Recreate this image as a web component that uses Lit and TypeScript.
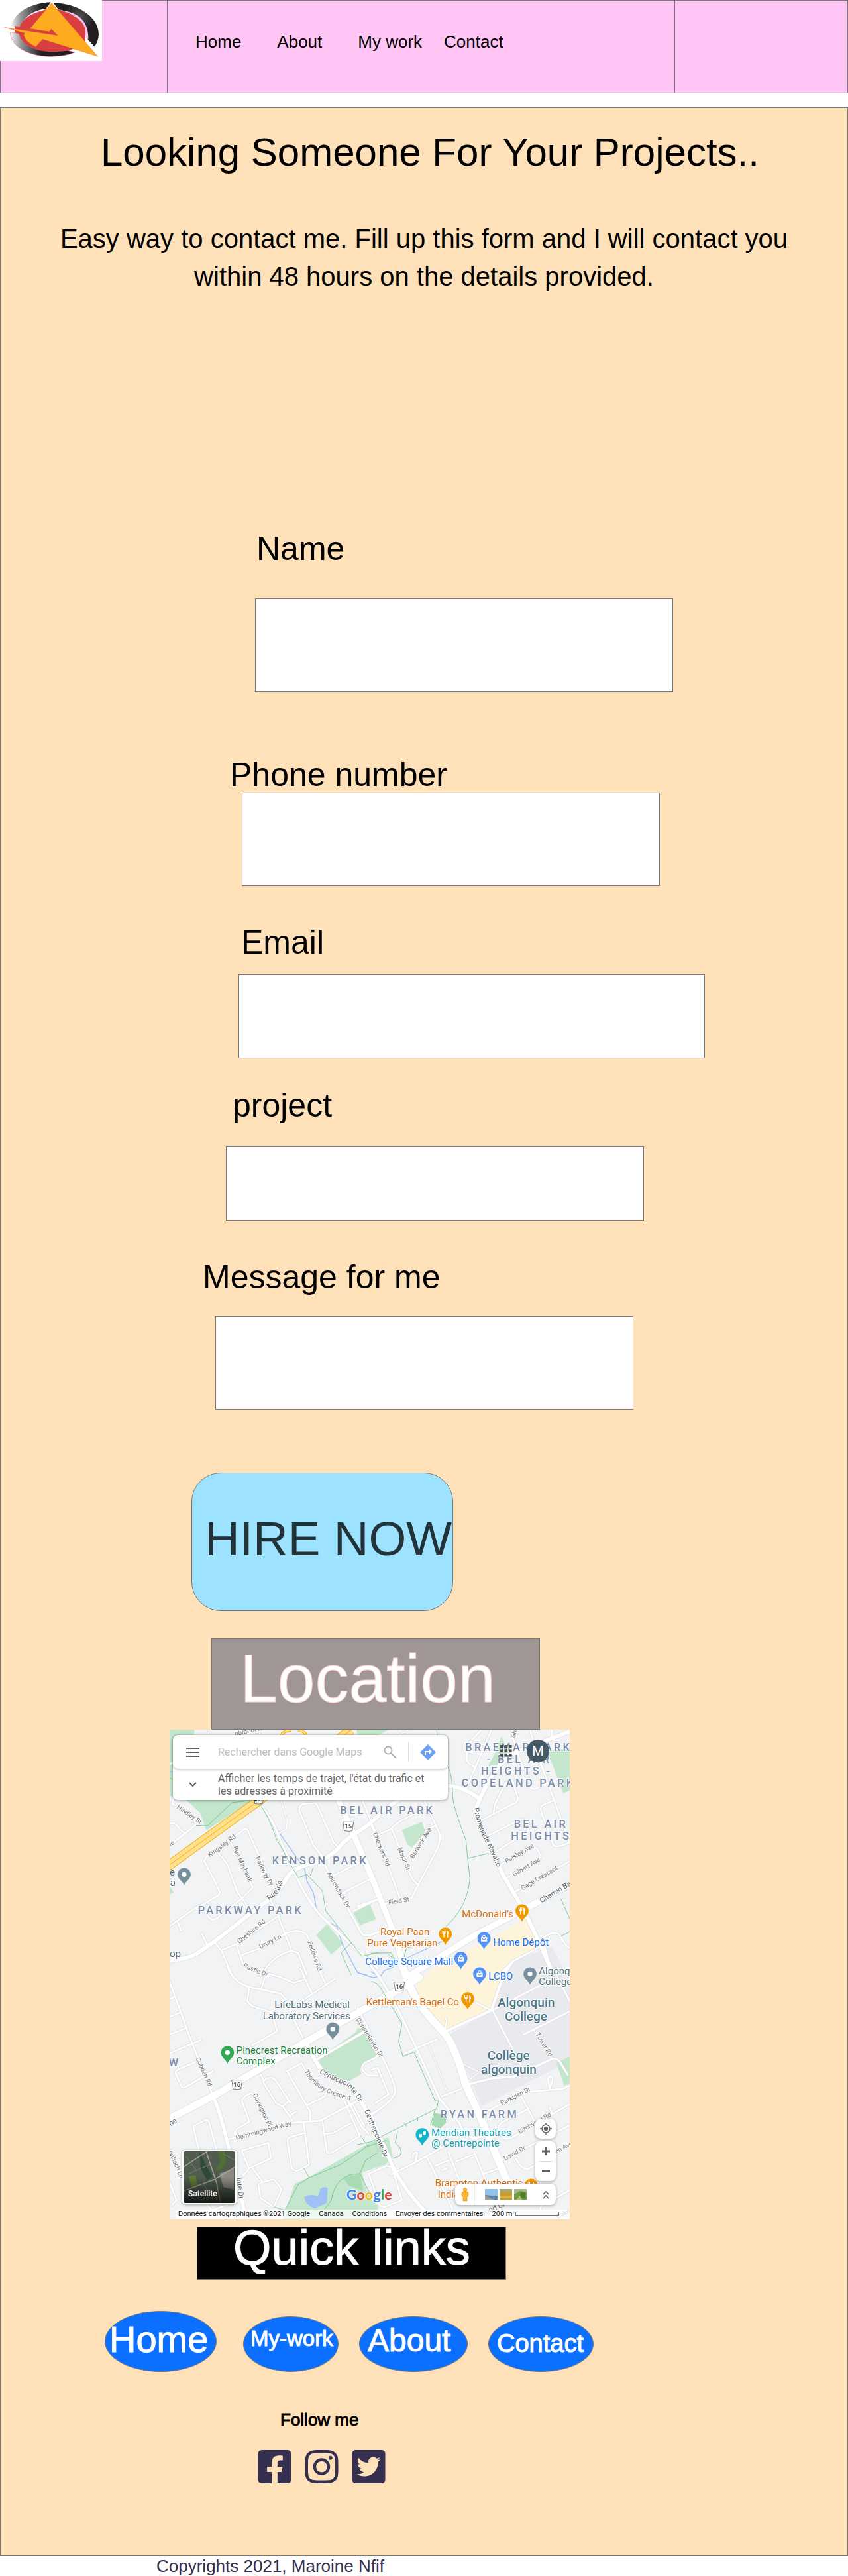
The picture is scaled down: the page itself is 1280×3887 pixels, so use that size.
import { LitElement, html, css, svg } from "lit";
import { customElement } from "lit/decorators.js";

/* ---------- Map data ----------
   The map is drawn on an 1812 x 2217 canvas. Every shape belongs to one of
   four tiles and is written in the coordinates of that tile. */
type Tile = "a" | "b" | "c" | "d";
const TILE: Record<Tile, [number, number]> = {
  a: [-18, -30],
  b: [912, -30],
  c: [-18, 1080],
  d: [912, 1080],
};
const at = (t: Tile) => `translate(${TILE[t][0]} ${TILE[t][1]})`;

const AREAS: [Tile, string, string][] = [
  ["a", "#c3e6cd", "M18,30H130L126,70V200L60,330H18Z"],
  ["a", "#c3e6cd", "M90,345H400L185,485L165,430L155,405Z"],
  ["a", "#c3e6cd", "M682,960L730,910L805,1000L750,1048Z"],
  ["a", "#c3e6cd", "M850,860L925,818L952,888L880,915Z"],
  ["a", "#c3e6cd", "M18,740L36,765L18,777Z"],
  ["a", "#c3e6cd", "M865,30H1010L960,55H870Z"],
  ["b", "#c3e6cd", "M140,485L230,447L245,490L200,572L165,550Z"],
  ["b", "#c3e6cd", "M590,60L625,130L600,185L530,195L565,130Z"],
  ["b", "#c3e6cd", "M800,130L900,110V305L870,318Z"],
  ["b", "#c3e6cd", "M-10,815L22,885L-15,895Z"],
  ["c", "#c3e6cd", "M690,410L860,290L870,270L895,275L960,400L880,450L886,480L830,510L730,490Z"],
  ["c", "#c3e6cd", "M530,1137L585,975L645,948L960,770L1010,768L1030,860L990,890L890,925L905,990Q930,1050 960,1070L970,1137Z"],
  ["c", "#a8dab5", "M805,950L880,930L895,1005L830,985Z"],
  ["c", "#9fc1f8", "M628,1035Q655,1018 690,1032L700,1000Q715,984 734,995L730,1062L675,1086Q632,1070 628,1035Z"],
  ["b", "#fdf4d9", "M205,1180L270,1120L700,888L780,1000L640,1075L620,1120L570,1270L520,1305L340,1390L310,1380Q220,1260 205,1180Z"],
  ["d", "#e8eaed", "M350,300L540,200L600,60L640,-30L820,-100L900,60V420L500,625L450,500Z"],
  ["d", "#a8dab5", "M288,655L340,665V700L312,727L275,710Z"],
  ["d", "#c3e6cd", "M840,430L900,400V520L875,532Z"],
];

const ROADS: [Tile, number, string][] = [
  ["a", 8, "M18,920L130,840L180,815L240,780Q250,770 240,755L215,700L175,625L185,605L345,490Q362,465 375,492L490,750"],
  ["a", 8, "M230,575L280,640L325,765L375,835"],
  ["a", 8, "M285,520L395,745L350,790L230,885Q205,900 190,870L175,845"],
  ["a", 10, "M405,340Q480,420 510,510L590,690Q640,800 700,870L860,1020L960,1110"],
  ["a", 5, "M520,345L550,440L548,480L510,500"],
  ["a", 8, "M715,610L670,555L605,395Q605,370 630,365L680,362L695,390L760,540L785,565"],
  ["a", 9, "M700,600L760,720L890,955Q905,972 960,945"],
  ["a", 8, "M760,690L880,630M800,770L920,710M850,850L960,798M890,345L960,520"],
  ["a", 8, "M55,900L70,940M165,955L185,1000M220,990L255,1035L300,1140"],
  ["a", 8, "M470,790L500,850L570,1030M250,1030L320,1000L515,870M320,1000L350,1090"],
  ["a", 8, "M345,1050L440,1015L530,960Q600,920 640,960L660,1000L710,1130"],
  ["a", 8, "M440,1140Q470,1060 570,1030L600,1040L640,1140"],
  ["a", 8, "M18,455Q40,445 60,475L85,500M18,555L138,460L118,410L30,365L38,330M18,185L60,170"],
  ["b", 8, "M500,30L435,100V170Q450,195 475,200M545,30L430,300"],
  ["b", 8, "M555,405L560,370L610,270L640,260L665,340Q665,360 645,365L500,440"],
  ["b", 8, "M665,180Q700,290 740,300L800,270M720,30L745,120L830,350L900,545"],
  ["b", 8, "M825,350L775,372Q765,385 770,400L825,550Q835,570 900,540M640,60L690,210M820,30V60"],
  ["b", 8, "M510,520L680,435Q715,430 715,470L710,490L570,580"],
  ["b", 8, "M590,640L725,562Q745,555 755,575L768,600L760,620L615,700M650,765L900,625"],
  ["b", 8, "M0,460L30,520L130,790M0,520L90,480Q130,430 250,395M95,480L180,690Q190,715 212,730M160,610L260,480L290,465"],
  ["b", 8, "M240,345L310,500Q315,535 300,570L215,730L185,790L55,820M-60,830L20,800M0,960L80,930"],
  ["b", 8, "M560,1160L640,1080L770,1010M770,980Q840,925 860,970Q880,1010 905,1022M780,990L810,1100"],
  ["b", 5, "M30,345L60,385M170,30L100,70"],
  ["c", 8, "M18,60L120,340L215,580"],
  ["c", 9, "M280,-10Q300,60 380,85L520,115Q550,140 565,200L620,310"],
  ["c", 8, "M378,90L370,150L390,170L480,200L505,285L390,350"],
  ["c", 8, "M450,20L520,40L580,65L630,50M610,0L660,110M600,160L765,48M690,0L725,70M455,20L435,90"],
  ["c", 8, "M18,140L40,130M18,220L65,200M18,300L95,270M18,385L160,325"],
  ["c", 8, "M215,465L85,540L75,540L45,475Q45,462 60,457L135,425"],
  ["c", 10, "M690,410L895,290"],
  ["c", 8, "M640,470L615,430L550,465L655,650V690"],
  ["c", 8, "M565,610L500,510Q480,485 455,500L442,515L500,610L530,625L575,690M530,625L560,600M560,670L590,650M430,480L445,510"],
  ["c", 9, "M280,775L570,700L700,690L870,600"],
  ["c", 8, "M320,755V728L380,695L345,600Q345,585 385,565L410,575L470,715"],
  ["c", 8, "M230,820L195,690L185,685L125,715L150,820"],
  ["c", 8, "M345,825L465,790L478,860L380,905L350,940M345,825L375,900M390,900L440,970"],
  ["c", 8, "M435,970L490,955L525,1000L490,1080L430,1040L420,980Z"],
  ["c", 8, "M640,620L720,580L728,560M810,600L880,760L750,835Q735,840 730,830L710,690"],
  ["c", 8, "M630,745L560,765Q550,770 552,785L570,900Q580,922 600,915L645,893L650,885L625,700M720,750L760,745L840,700M820,590L890,720L920,750M850,620L900,715"],
  ["c", 8, "M18,970L50,1050L30,1070M160,1040L210,1095L280,1070"],
  ["c", 8, "M960,400L900,430Q885,445 895,465L915,485H960M960,645L920,665"],
  ["d", 10, "M-20,-30Q60,40 200,350L310,590L400,700Q430,780 490,765L560,735"],
  ["d", 8, "M145,390L200,365L300,320M320,580L410,545"],
  ["d", 4, "M260,340L345,560M410,430L490,470L440,510"],
  ["d", 10, "M440,525L550,498L650,490L820,410"],
  ["d", 8, "M820,410Q850,405 865,440L890,480M550,190L680,440M550,190L800,60M690,300L900,195M740,280L820,410M840,30L900,150M475,155L540,190"],
  ["d", 12, "M640,-30L600,30L545,190L340,285"],
  ["d", 6, "M335,280L342,240L338,225"],
  ["d", 8, "M500,660L700,560L870,545L900,530M810,545L802,510Q800,490 815,488Q828,495 818,520L810,540"],
  ["d", 8, "M680,580L760,730M810,630L820,660M715,635L590,700Q570,720 580,735L600,765Q610,778 640,765L900,615"],
  ["d", 8, "M590,870L900,710M650,850Q680,912 710,910L900,805M770,1100Q755,1080 790,1065L900,1005"],
  ["d", 8, "M90,935L190,885L340,800M250,850L370,1090M350,830L400,960L410,1000M385,875L470,840L560,1060M290,895L350,870M320,915L345,905M510,930L570,910"],
  ["d", 8, "M-10,930L70,895L95,900L140,1050L60,1080L40,1075ZM190,860Q185,830 210,835L200,880M0,460L30,450L80,570L20,610"],
  ["d", 8, "M-60,180L50,400Q110,520 110,560Q100,600 0,665"],
  ["c", 16, "M215,580Q245,640 290,830L360,1110"],
  ["c", 18, "M640,340Q660,400 720,480Q850,530 890,610L930,680"],
  ["d", 16, "M0,670L100,900Q150,1000 245,1100"],
  ["a", 18, "M0,1078Q90,1070 140,1045L220,990L380,865L480,790Q520,750 560,685Q600,645 680,632Q760,600 800,545L850,505Q930,460 980,400L1050,350Q1150,285 1290,285Q1350,290 1425,345"],
  ["b", 18, "M920,30L660,130Q570,170 490,350L470,400Q490,470 530,540L600,690L700,860L810,1100"],
  ["b", 26, "M-190,250L-80,500L0,690L100,940L150,1100"],
  ["d", 34, "M135,-30L180,90Q220,180 330,290Q380,350 430,530L490,660L640,1020"],
  ["c", 32, "M0,690L230,570L640,330L1060,95L1150,40"],
  ["b", 28, "M180,1140L480,955L700,840L910,725"],
];

const TRAILS: [Tile, string][] = [
  ["a", "M430,370Q470,430 500,520L600,700L640,685L710,760L725,850L840,995L890,1055L960,1040"],
  ["a", "M840,995L795,1040L840,1140M140,463L190,465L300,360L380,350M18,250L35,255M668,655L655,690"],
  ["b", "M298,30L300,60M350,200Q370,240 370,340Q380,400 430,530Q440,640 448,700Q440,830 340,920"],
  ["b", "M440,612L530,590M860,795L900,885M860,965L900,945M0,1042L90,1040L110,1070L80,1050M150,1060L160,1020L240,990"],
  ["d", "M0,60Q30,60 50,100L140,250L125,330L145,400L195,380L290,600L305,600L298,635L0,785L-70,800"],
  ["d", "M120,740L110,790Q150,820 130,850L100,860M150,700L160,715M208,670L212,690M270,710L290,640"],
  ["c", "M490,1080L540,1095L600,980L650,948L790,890L915,805L1000,780M915,805L885,760M650,948L628,908"],
  ["c", "M720,1090L750,1050Q770,930 880,930L905,870L960,835M880,930L920,1010"],
];

const STREAMS: [Tile, string][] = [
  ["a", "M425,360L445,395M510,490L630,660L640,715L670,770L683,840M725,895L775,920L800,1000L870,1130L910,1140M18,220H35"],
  ["b", "M160,1065L320,990M0,1125L40,1150L60,1120L100,1105"],
  ["c", "M860,0L870,20L940,42L960,38"],
];

const LABELS: [Tile, number, number, number, string, string][] = [
  ["a", 790, 410, 0, "area", "BEL AIR PARK"],
  ["a", 482, 638, 0, "area", "KENSON PARK"],
  ["a", 146, 863, 0, "area", "PARKWAY PARK"],
  ["b", 427, 127, 0, "area", "BRAEMAR PARK"],
  ["b", 524, 181, 0, "area", "- BEL AIR"],
  ["b", 498, 235, 0, "area", "HEIGHTS -"],
  ["b", 410, 289, 0, "area", "COPELAND PARK"],
  ["b", 647, 473, 0, "area", "BEL AIR"],
  ["b", 634, 527, 0, "area", "HEIGHTS"],
  ["d", 314, 678, 0, "area", "RYAN FARM"],
  ["c", 14, 445, 0, "area", "W"],
  ["b", 412, 880, 0, "poi food", "McDonald's"],
  ["b", 42, 961, 0, "poi food", "Royal Paan -"],
  ["b", -17, 1010, 0, "poi food", "Pure Vegetarian"],
  ["b", 553, 1007, 0, "poi shop", "Home Dépôt"],
  ["a", 904, 1095, 0, "poi shop", "College Square Mall"],
  ["d", 532, 52, 0, "poi shop", "LCBO"],
  ["d", 760, 27, 0, "poi civic", "Algonquin"],
  ["d", 760, 76, 0, "poi civic", "College"],
  ["c", 908, 167, 0, "poi food", "Kettleman's Bagel Co"],
  ["c", 493, 181, 0, "poi civic", "LifeLabs Medical"],
  ["c", 440, 230, 0, "poi civic", "Laboratory Services"],
  ["c", 320, 387, 0, "poi park", "Pinecrest Recreation"],
  ["c", 320, 435, 0, "poi park", "Complex"],
  ["d", 273, 760, 0, "poi arts", "Meridian Theatres"],
  ["d", 273, 808, 0, "poi arts", "@ Centrepointe"],
  ["d", 290, 988, 0, "poi food", "Brampton Authentic"],
  ["d", 302, 1037, 0, "poi food", "Indian"],
  ["a", 18, 690, 0, "poi civic", "e"],
  ["a", 20, 738, 0, "poi civic", "a"],
  ["a", 18, 1058, 0, "poi civic", "op"],
  ["d", 573, 174, 0, "campus", "Algonquin"],
  ["d", 606, 237, 0, "campus", "College"],
  ["d", 527, 415, 0, "campus", "Collège"],
  ["d", 498, 478, 0, "campus", "algonquin"],
  ["a", 48, 385, 34, "street", "Hindley St"],
  ["a", 200, 608, -37, "street", "Kingsley Rd"],
  ["a", 305, 562, 66, "street", "Rue Maybank"],
  ["a", 405, 610, 63, "street", "Parkway Dr"],
  ["a", 728, 680, 60, "street", "Adirondack Dr"],
  ["a", 334, 1000, -39, "street", "Cheshire Rd"],
  ["a", 430, 1022, -27, "street", "Drury Ln"],
  ["a", 642, 992, 70, "street", "Fellows Rd"],
  ["a", 350, 1105, 22, "street", "Rustic Dr"],
  ["a", 18, 562, -35, "street", "ve"],
  ["a", 315, 58, -12, "street", "nbrandt Rd"],
  ["b", 8, 500, 68, "street", "Checkers Rd"],
  ["b", 120, 568, 67, "street", "Major St"],
  ["b", 192, 615, -58, "street", "Berwick Ave"],
  ["b", 80, 822, -9, "street", "Field St"],
  ["b", 650, 68, -68, "street", "Sherman Dr"],
  ["b", 614, 636, -31, "street", "Paisley Ave"],
  ["b", 648, 695, -31, "street", "Gilbert Ave"],
  ["b", 686, 758, -31, "street", "Gage Crescent"],
  ["b", 772, 815, -31, "street main", "Chemin Baseline"],
  ["c", 136, 408, 66, "street", "Cobden Rd"],
  ["c", 394, 572, 64, "street", "Covington Pl"],
  ["c", 320, 778, -15, "street", "Hemmingwood Way"],
  ["c", 862, 232, 58, "street", "Constellation Dr"],
  ["c", 12, 830, 67, "street", "onbach Ln"],
  ["c", 22, 714, -30, "street main", "ne"],
  ["c", 320, 950, 82, "street main", "inte Dr"],
  ["d", 745, 298, 60, "street", "Tower Rd"],
  ["d", 592, 620, -27, "street", "Parkglen Dr"],
  ["d", 674, 750, -30, "street", "Birchview Rd"],
  ["d", 608, 872, -30, "street", "David Dr"],
  ["d", 780, 868, -27, "street", "Wolden Ave"],
  ["d", 480, 1128, -22, "street main", "nwood Dr"],
  ["d", 845, 1135, -27, "street", "Oakridge"],
];

const CURVED: [Tile, string, string, string][] = [
  ["a", "M470,804L515,765L534,700L538,660", "street main", "Rue Iris"],
  ["b", "M465,385Q480,470 530,560L600,720", "street main", "Promenade Navaho"],
  ["c", "M695,474Q760,508 815,530Q865,565 890,650", "street main", "Centrepointe Dr"],
  ["c", "M900,645L1030,960", "street main", "Centrepointe Dr"],
  ["c", "M628,466Q675,560 815,590L850,600", "street", "Thornbury Crescent"],
];

const FORK = "M-15,-16V-6Q-15,1 -9,2V16H-5V2Q1,1 1,-6V-16H-2V-6H-5V-16H-9V-6H-12V-16ZM7,16V-16Q15,-12 15,0H12V16Z";
const BAG = "M-14,-5H-8V-8A8,8 0 0 1 8,-8V-5H14V14H-14ZM-5,-5H5V-8A5,5 0 0 0 -5,-8ZM-8,-1A8,8 0 0 0 8,-1H5A5,5 0 0 1 -5,-1Z";
const DOT = "M-11,0A11,11 0 1 0 11,0A11,11 0 1 0 -11,0Z";
const MASKS = "M-16,-2H-1V10Q-8,18 -16,10ZM2,-14H17V-2Q10,6 2,-2Z";
const PINS: [Tile, number, number, string, string][] = [
  ["a", 84, 685, "#78909c", DOT],
  ["b", 684, 850, "#f29900", FORK],
  ["b", 337, 955, "#f29900", FORK],
  ["b", 512, 975, "#5491f5", BAG],
  ["b", 407, 1065, "#5491f5", BAG],
  ["d", 492, 25, "#5491f5", BAG],
  ["d", 720, 25, "#78909c", DOT],
  ["d", 438, 138, "#f29900", FORK],
  ["c", 757, 275, "#78909c", DOT],
  ["c", 280, 382, "#34a853", DOT],
  ["d", 232, 753, "#12b5cb", MASKS],
  ["d", 725, 982, "#f29900", FORK],
];

const SHIELDS: [Tile, number, number, string][] = [
  ["a", 827, 468, "15"],
  ["c", 323, 526, "16"],
  ["d", 128, 82, "16"],
  ["a", 422, 344, "417"],
];

const GOOGLE: [string, string][] = [
  ["G", "#4285f4"], ["o", "#ea4335"], ["o", "#fbbc04"],
  ["g", "#4285f4"], ["l", "#34a853"], ["e", "#ea4335"],
];

@customElement("city-map")
export class CityMap extends LitElement {
  static styles = css`
    :host { display: block; position: relative; overflow: hidden; font-family: Roboto, "Liberation Sans", sans-serif; background: #f1f3f4; }
    * { box-sizing: border-box; }
    .canvas { display: block; width: 100%; height: auto; }
    button { border: 0; background: none; padding: 0; margin: 0; font: inherit; color: inherit; cursor: pointer; display: flex; align-items: center; justify-content: center; }
    text { paint-order: stroke; stroke: #fff; stroke-linejoin: round; }
    .area { font-size: 49px; font-weight: 500; letter-spacing: 10px; fill: #7b8ba8; stroke-width: 5px; }
    .poi { font-size: 45px; stroke-width: 6px; }
    .food { fill: #d56e0c; }
    .shop { fill: #1a73e8; }
    .civic { fill: #546e7a; }
    .park { fill: #188038; }
    .arts { fill: #129eaf; }
    .campus { font-size: 57px; font-weight: 500; fill: #4a7688; stroke-width: 6px; }
    .street { font-size: 29px; fill: #757575; stroke-width: 5px; }
    .main { font-size: 33px; fill: #5a6468; }
    .shield { font-size: 28px; fill: #333; stroke: none; text-anchor: middle; font-weight: 500; }
    .brand { font-family: Lato, sans-serif; font-size: 65px; font-weight: 700; stroke-width: 6px; }

    .panel { position: absolute; left: 5px; top: 8px; width: 415px; max-width: 80%; border-radius: 8px; background: #fff; box-shadow: 0 1px 4px rgba(0, 0, 0, 0.35); color: #666; }
    .search { display: flex; align-items: center; height: 51px; padding: 0 18px; border-radius: 8px; box-shadow: 0 1px 4px rgba(0, 0, 0, 0.3); }
    .search input { flex: 1; min-width: 0; margin-left: 26px; padding: 0; border: 0; outline: 0; background: none; font: 16px/20px Roboto, sans-serif; }
    .search input::placeholder { color: #bdbdbd; opacity: 1; }
    .divider { width: 1px; height: 29px; margin: 0 17px; background: #ddd; }
    .hint { display: flex; align-items: center; gap: 32px; height: 47px; padding-left: 24px; font-size: 16px; line-height: 19px; }
    .hint p { margin: 0; }
    .account { position: absolute; right: 31px; top: 15px; display: flex; align-items: center; gap: 22px; }
    .avatar { width: 34px; height: 34px; border-radius: 50%; background: #455a64; color: #fff; font-size: 20px; }
    .controls { position: absolute; right: 21px; bottom: 22px; display: flex; flex-direction: column; align-items: flex-end; gap: 4px; }
    .card { background: #fff; border-radius: 8px; box-shadow: 0 1px 4px rgba(0, 0, 0, 0.35); }
    .locate { width: 31px; height: 30px; }
    .zoom { width: 31px; }
    .zoom button { width: 31px; height: 30px; }
    .zoom button + button::before { content: ""; position: absolute; width: 21px; height: 1px; margin-bottom: 30px; background: #ddd; }
    .bar { display: flex; align-items: center; width: 152px; height: 32px; }
    .bar .figure { width: 30px; height: 32px; border-right: 1px solid #eee; }
    .thumbs { flex: 1; display: flex; gap: 3px; justify-content: center; }
    .bar .more { width: 30px; height: 32px; }
    .satellite { position: absolute; left: 19px; bottom: 23px; width: 82px; height: 82px; border: 2px solid #fff; border-radius: 5px; overflow: hidden; box-shadow: 0 1px 4px rgba(0, 0, 0, 0.35); }
    .satellite svg { position: absolute; inset: 0; }
    .satellite span { position: absolute; left: 7px; bottom: 7px; color: #fff; font-size: 12px; line-height: 14px; font-weight: 500; }
    .credits { position: absolute; left: 10px; right: 0; bottom: 1px; display: flex; gap: 13px; height: 14px; padding-left: 3px; background: rgba(255, 255, 255, 0.7); font-size: 11px; line-height: 14px; color: #111; white-space: nowrap; }
    .credits a { color: inherit; text-decoration: none; }
    .scale { display: flex; align-items: center; gap: 4px; }
    .rule { width: 67px; height: 6px; border: 2px solid #777; border-top: 0; }
  `;

  private road(pick: (w: number) => number, color: string) {
    return ROADS.map(([t, w, d]) => svg`<path transform=${at(t)} d=${d} stroke=${color} stroke-width=${pick(w)} />`);
  }

  private drawing() {
    return svg`
      <rect width="1812" height="2217" fill="#f1f3f4" />
      ${AREAS.map(([t, c, d]) => svg`<path transform=${at(t)} d=${d} fill=${c} />`)}
      <g fill="none" stroke-linecap="round" stroke-linejoin="round">
        ${STREAMS.map(([t, d]) => svg`<path transform=${at(t)} d=${d} stroke="#9fc1f8" stroke-width="4" />`)}
        ${this.road((w) => w + 5, "#dddfe3")}
        ${this.road((w) => w, "#ffffff")}
        ${TRAILS.map(([t, d]) => svg`<path transform=${at(t)} d=${d} stroke="#6abf82" stroke-width="2.5" />`)}
        <g transform=${at("a")} stroke-linecap="butt">
          <path d="M0,655L430,345L840,30" stroke="#f9ab00" stroke-width="44" />
          <path d="M0,655L430,345L840,30" stroke="#ffe08f" stroke-width="38" />
          <path d="M0,655L430,345L840,30" stroke="#f9ab00" stroke-width="3" />
          <path d="M520,60Q530,35 570,32M640,60Q630,35 600,32" stroke="#f9ab00" stroke-width="12" />
          <path d="M520,60Q530,35 570,32M640,60Q630,35 600,32" stroke="#ffe08f" stroke-width="7" />
        </g>
      </g>
      ${SHIELDS.map(([t, x, y, n]) => svg`
        <g transform=${at(t)}><g transform="translate(${x} ${y})">
          <path d="M-24,-20H24Q22,-8 20,4L18,20Q0,24 -18,20L-20,4Q-22,-8 -24,-20Z" fill="#fff" stroke="#777" stroke-width="3" stroke-linejoin="round" />
          <text class="shield" y="10">${n}</text>
        </g></g>`)}
      ${LABELS.map(([t, x, y, r, c, s]) => svg`
        <g transform=${at(t)}><text class=${c} transform="translate(${x} ${y}) rotate(${r})">${s}</text></g>`)}
      ${CURVED.map(([t, d, c, s], i) => svg`
        <g transform=${at(t)}><path id="curve${i}" d=${d} fill="none" /><text class=${c}><textPath href="#curve${i}">${s}</textPath></text></g>`)}
      ${PINS.map(([t, x, y, c, g]) => svg`
        <g transform=${at(t)}><g transform="translate(${x} ${y})">
          <path d="M0,54C-5,30 -31,24 -31,0A31,31 0 1 1 31,0C31,24 5,30 0,54Z" fill=${c} stroke="#fff" stroke-width="2" />
          <path d=${g} fill="#fff" fill-rule="evenodd" />
        </g></g>`)}
      <text class="brand" x="800" y="2128">${GOOGLE.map(([s, c]) => svg`<tspan fill=${c}>${s}</tspan>`)}</text>
    `;
  }

  render() {
    return html`
      <svg class="canvas" viewBox="0 0 1812 2217" role="img" aria-label="Carte">${this.drawing()}</svg>

      <div class="panel">
        <div class="search">
          <button aria-label="Menu">
            <svg width="24" height="16" viewBox="0 0 24 16"><path d="M2,2H22M2,8H22M2,14H22" stroke="#616161" stroke-width="2" /></svg>
          </button>
          <input type="search" aria-label="Rechercher dans Google Maps" placeholder="Rechercher dans Google Maps" />
          <button aria-label="Rechercher">
            <svg width="20" height="20" viewBox="0 0 20 20" fill="none" stroke="#b0b0b0" stroke-width="2"><circle cx="7" cy="7" r="5.5" /><path d="M11,11L19,19" /></svg>
          </button>
          <span class="divider"></span>
          <button aria-label="Itinéraires">
            <svg width="24" height="24" viewBox="0 0 24 24"><path d="M12,0.5L23.5,12L12,23.5L0.5,12Z" fill="#6a9ff8" stroke="#6a9ff8" stroke-linejoin="round" /><path d="M8,16V11H15" fill="none" stroke="#fff" stroke-width="2" /><path d="M14,7L18,11L14,15Z" fill="#fff" /></svg>
          </button>
        </div>
        <div class="hint">
          <button aria-label="Développer">
            <svg width="12" height="8" viewBox="0 0 12 8"><path d="M1,1L6,6L11,1" fill="none" stroke="#616161" stroke-width="2" /></svg>
          </button>
          <p>Afficher les temps de trajet, l'état du trafic et<br />les adresses à proximité</p>
        </div>
      </div>

      <div class="account">
        <button aria-label="Applications">
          <svg width="18" height="18" viewBox="0 0 18 18" fill="#333" fill-opacity="0.85">
            ${[0, 1, 2].map((r) => [0, 1, 2].map((c) => svg`<rect x=${c * 6.5} y=${r * 6.5} width="4.6" height="4.6" />`))}
          </svg>
        </button>
        <button class="avatar" aria-label="Compte">M</button>
      </div>

      <button class="satellite">
        <svg viewBox="0 0 78 78">
          <defs><linearGradient id="shade" x2="0" y2="1"><stop offset="0.5" stop-opacity="0" /><stop offset="1" stop-opacity="0.75" /></linearGradient></defs>
          <rect width="78" height="78" fill="#4f5c4e" />
          <path d="M24,0L34,22L44,38L36,44L26,26Z" fill="#2c4a35" />
          <path d="M52,0H62L64,18L54,30L48,28L56,16Z" fill="#4f7030" />
          <path d="M8,38L18,36L22,54L12,56Z" fill="#5f7a35" />
          <path d="M54,34L76,26V58L60,54Z" fill="#8d8982" />
          <path d="M0,24L36,0M34,0L50,48L56,78M0,60L48,42L78,24" fill="none" stroke="#a9a69b" stroke-width="1.5" />
          <path d="M4,8L20,30M8,34L40,20M16,62L40,58M30,50L44,70M60,4L78,14" stroke="#7a8478" fill="none" />
          <rect width="78" height="78" fill="url(#shade)" />
        </svg>
        <span>Satellite</span>
      </button>

      <div class="controls">
        <button class="card locate" aria-label="Ma position">
          <svg width="18" height="18" viewBox="0 0 18 18" stroke="#616161" stroke-width="1.5" fill="none"><circle cx="9" cy="9" r="6" /><circle cx="9" cy="9" r="3.2" fill="#616161" stroke="none" /><path d="M9,0V3M9,15V18M0,9H3M15,9H18" /></svg>
        </button>
        <div class="card zoom">
          <button aria-label="Zoom avant"><svg width="12" height="12" viewBox="0 0 12 12"><path d="M0,6H12M6,0V12" stroke="#616161" stroke-width="3" /></svg></button>
          <button aria-label="Zoom arrière"><svg width="12" height="12" viewBox="0 0 12 12"><path d="M0,6H12" stroke="#616161" stroke-width="3" /></svg></button>
        </div>
        <div class="card bar">
          <button class="figure" aria-label="Street View">
            <svg width="12" height="21" viewBox="0 0 12 21" fill="#fbb12a" stroke="#d98b0c" stroke-width="0.6"><circle cx="6" cy="3.2" r="2.8" /><path d="M1,8Q1,6 4,6H8Q11,6 11,8V13H9V20H3V13H1Z" /></svg>
          </button>
          <div class="thumbs">
            <svg width="19" height="16" viewBox="0 0 19 16"><rect width="19" height="16" fill="#8fc1ea" /><path d="M0,9L19,11V16H0Z" fill="#5d84a8" /><path d="M0,10L14,16H0Z" fill="#a2a098" /></svg>
            <svg width="19" height="16" viewBox="0 0 19 16"><rect width="19" height="16" fill="#c99f2c" /><rect width="19" height="5" fill="#a9a878" /><rect y="11" width="19" height="3" fill="#dcb447" /></svg>
            <svg width="19" height="16" viewBox="0 0 19 16"><rect width="19" height="16" fill="#6f9c3b" /><path d="M0,0H19V5L9,3L0,8Z" fill="#a8b98e" /><circle cx="13" cy="9" r="4" fill="#4f7d29" /><path d="M3,16L9,10L12,16Z" fill="#a9c26a" /></svg>
          </div>
          <button class="more" aria-label="Afficher les images">
            <svg width="10" height="13" viewBox="0 0 10 13" fill="none" stroke="#616161" stroke-width="1.7"><path d="M1,6L5,2L9,6M1,12L5,8L9,12" /></svg>
          </button>
        </div>
      </div>

      <div class="credits">
        <span>Données cartographiques ©2021 Google</span>
        <a href="#">Canada</a>
        <a href="#">Conditions</a>
        <a href="#">Envoyer des commentaires</a>
        <span class="scale">200 m<span class="rule"></span></span>
      </div>
    `;
  }
}

@customElement("app-root")
export class AppRoot extends LitElement {
  static styles = css`
    :host { display: block; background: #fff; color: #000; font-family: "Liberation Sans", Arial, sans-serif; }
    * { box-sizing: border-box; }
    h1, h2, p { margin: 0; font-weight: 400; }
    a { color: inherit; text-decoration: none; }

    header { display: grid; grid-template-columns: 251px 1fr 260px; height: 141px; border: 1px solid #777; background: #ffc5f5; position: relative; }
    .logo { position: absolute; left: -1px; top: -1px; display: block; line-height: 0; }
    nav { grid-column: 2; border: solid #777; border-width: 0 1px; padding: 47px 0 0 42px; display: flex; font-size: 26px; line-height: 30px; }
    nav a { margin-right: 54px; }
    nav a:nth-child(3) { margin-right: 33px; }

    main { margin-top: 21px; border: 1px solid #777; background: #ffe1b9; padding: 33px 0 109px; display: flex; flex-direction: column; align-items: flex-start; }
    h1 { padding-left: 151px; font-size: 60px; line-height: 68px; }
    .intro { align-self: center; width: 100%; max-width: 1120px; margin-top: 68px; text-align: center; font-size: 40px; line-height: 57px; }

    form { display: flex; flex-direction: column; align-items: flex-start; width: 100%; margin-top: 355px; }
    label { font-size: 50px; line-height: 54px; }
    input, textarea { display: block; width: 100%; max-width: 631px; height: 141px; margin: 0; padding: 0 16px; border: 1px solid #777; border-radius: 0; background: #fff; font: 40px "Liberation Sans", sans-serif; resize: none; }
    .field { display: flex; flex-direction: column; width: 100%; }
    .name { padding-left: 384px; }
    .name label { padding-left: 2px; }
    .name input { margin-top: 48px; }
    .phone { padding-left: 346px; margin-top: 98px; }
    .phone input { margin-left: 18px; }
    .email { padding-left: 359px; margin-top: 58px; }
    .email label { padding-left: 4px; }
    .email input { margin-top: 21px; max-width: 704px; height: 127px; }
    .project { padding-left: 340px; margin-top: 44px; }
    .project label { padding-left: 10px; }
    .project input { margin-top: 34px; height: 113px; }
    .message { padding-left: 305px; margin-top: 58px; }
    .message textarea { margin: 32px 0 0 19px; }

    .hire { margin: 95px 0 0 288px; width: 395px; height: 209px; padding: 0 0 10px 19px; border: 1px solid #777; border-radius: 44px; background: #9de3ff; color: #223239; font: 73px "Liberation Sans", sans-serif; text-align: left; white-space: nowrap; cursor: pointer; }
    .location { margin: 41px 0 0 318px; width: 496px; padding: 0 0 16px 42px; border: 1px solid #777; background: #a09696; color: #fff; font-size: 102px; line-height: 120px; -webkit-text-stroke: 1px #ffd0d0; }
    city-map { margin-left: 255px; width: 604px; max-width: 100%; }
    .quick { margin: 11px 0 0 296px; width: 467px; padding: 0 0 16px 54px; border: 1px solid #777; background: #000; color: #fff; font-size: 74px; line-height: 62px; -webkit-text-stroke: 1px #fff; }

    .links { display: flex; align-items: flex-end; gap: 31px; margin: 47px 0 0 157px; }
    .pill { display: flex; align-items: center; height: 84px; border: 1px solid #777; border-radius: 50%; background: #0b70ff; color: #fff; -webkit-text-stroke: 1px #fff; white-space: nowrap; }
    .pill-home { width: 169px; height: 92px; margin-right: 9px; padding: 0 0 8px 6px; font-size: 56px; }
    .pill-work { width: 144px; padding: 0 0 16px 10px; font-size: 33px; }
    .pill-about { width: 164px; padding: 0 0 12px 12px; font-size: 48px; }
    .pill-contact { width: 159px; padding: 0 0 2px 12px; font-size: 38px; }

    .follow { margin: 57px 0 0 422px; font-size: 26px; line-height: 30px; -webkit-text-stroke: 1px #000; }
    .social { display: flex; gap: 20px; margin: 31px 0 0 388px; color: #352f50; }
    .social svg { display: block; width: 51px; height: 50px; fill: currentColor; }
    footer { padding-left: 236px; font-size: 26px; line-height: 30px; color: #352f50; }
  `;

  private logo() {
    return html`
      <svg width="154" height="92" viewBox="0 0 462 276" role="img" aria-label="Logo">
        <defs>
          <linearGradient id="ringTop" x1="45" x2="235" y1="0" y2="0" gradientUnits="userSpaceOnUse">
            <stop offset="0" stop-color="#fff" /><stop offset="0.25" stop-color="#999" /><stop offset="0.75" stop-color="#231f20" />
          </linearGradient>
          <radialGradient id="ringRight" cx="360" cy="75" r="70" gradientUnits="userSpaceOnUse">
            <stop offset="0" stop-color="#505050" /><stop offset="1" stop-color="#231f20" />
          </radialGradient>
        </defs>
        <rect width="462" height="276" fill="#fff" />
        <path d="M48,118C70,50 145,14 230,10L208,40C150,46 110,75 92,122Z" fill="url(#ringTop)" />
        <path d="M240,12C360,16 447,80 447,155Q446,185 428,212L398,180C400,110 350,60 264,42Z" fill="url(#ringRight)" />
        <path d="M47,145C46,215 140,258 235,256Q300,254 338,237L305,228L240,232C150,232 100,200 86,152Z" fill="url(#ringTop)" stroke="#d9607a" stroke-width="2" />
        <path d="M120,80Q145,58 182,48L175,60ZM288,48C370,62 402,110 400,178L384,165V130C375,90 340,66 288,48Z" fill="#ffc5f5" />
        <path d="M208,42L180,52C125,68 100,95 90,120L66,118V148L86,154C100,205 160,234 235,234C280,234 310,230 330,222L386,188V130C375,90 330,62 264,42Z" fill="#d93f40" />
        <path d="M234,13L443,256L193,178L162,212Q115,190 108,160L112,150L20,124L262,161L233,131L223,143L136,130Z" fill="#ffab20" stroke="#e0543c" stroke-width="1" />
        <path d="M386,188L398,180L428,212L418,222Z" fill="#fff" />
      </svg>
    `;
  }

  render() {
    return html`
      <header>
        <a class="logo" href="#">${this.logo()}</a>
        <nav>
          <a href="#">Home</a>
          <a href="#">About</a>
          <a href="#">My work</a>
          <a href="#">Contact</a>
        </nav>
      </header>

      <main>
        <h1>Looking Someone For Your Projects..</h1>
        <p class="intro">Easy way to contact me. Fill up this form and I will contact you within 48 hours on the details provided.</p>

        <form @submit=${(e: Event) => e.preventDefault()}>
          <div class="field name">
            <label for="name">Name</label>
            <input id="name" type="text" autocomplete="name" />
          </div>
          <div class="field phone">
            <label for="phone">Phone number</label>
            <input id="phone" type="tel" autocomplete="tel" />
          </div>
          <div class="field email">
            <label for="email">Email</label>
            <input id="email" type="email" autocomplete="email" />
          </div>
          <div class="field project">
            <label for="project">project</label>
            <input id="project" type="text" />
          </div>
          <div class="field message">
            <label for="message">Message for me</label>
            <textarea id="message"></textarea>
          </div>
          <button class="hire" type="submit">HIRE NOW</button>
        </form>

        <h2 class="location">Location</h2>
        <city-map></city-map>

        <h2 class="quick">Quick links</h2>
        <div class="links">
          <a class="pill pill-home" href="#">Home</a>
          <a class="pill pill-work" href="#">My-work</a>
          <a class="pill pill-about" href="#">About</a>
          <a class="pill pill-contact" href="#">Contact</a>
        </div>

        <p class="follow">Follow me</p>
        <div class="social">
          <a href="#" aria-label="Facebook">
            <svg viewBox="0 32 448 448"><path d="M400 32H48A48 48 0 0 0 0 80v352a48 48 0 0 0 48 48h137.25V327.69h-63V256h63v-54.64c0-62.15 37-96.48 93.67-96.48 27.14 0 55.52 4.84 55.52 4.84v61h-31.27c-30.81 0-40.42 19.12-40.42 38.73V256h68.78l-11 71.69h-57.78V480H400a48 48 0 0 0 48-48V80a48 48 0 0 0-48-48z" /></svg>
          </a>
          <a href="#" aria-label="Instagram">
            <svg viewBox="0 32 448 448"><path d="M224.1 141c-63.6 0-114.9 51.3-114.9 114.9s51.3 114.9 114.9 114.9S339 319.5 339 255.900 287.700 141 224.100 141zm0 189.600c-41.100 0-74.700-33.500-74.700-74.700s33.500-74.700 74.700-74.700 74.700 33.500 74.700 74.700-33.600 74.700-74.700 74.700zm146.400-194.300c0 14.900-12 26.800-26.800 26.800-14.900 0-26.800-12-26.800-26.800s12-26.800 26.800-26.800 26.800 12 26.800 26.800zm76.100 27.200c-1.700-35.900-9.900-67.700-36.200-93.900-26.200-26.200-58-34.400-93.900-36.200-37-2.100-147.900-2.100-184.900 0-35.800 1.700-67.600 9.900-93.900 36.100s-34.400 58-36.200 93.900c-2.100 37-2.100 147.900 0 184.900 1.700 35.900 9.900 67.700 36.200 93.900s58 34.400 93.900 36.200c37 2.100 147.900 2.100 184.900 0 35.900-1.700 67.700-9.900 93.900-36.200 26.200-26.200 34.400-58 36.200-93.900 2.100-37 2.100-147.800 0-184.800zM398.800 388c-7.800 19.600-22.900 34.700-42.600 42.600-29.500 11.700-99.500 9-132.100 9s-102.700 2.600-132.100-9c-19.600-7.800-34.700-22.900-42.600-42.600-11.700-29.500-9-99.500-9-132.100s-2.600-102.700 9-132.100c7.800-19.600 22.900-34.700 42.600-42.600 29.500-11.700 99.500-9 132.100-9s102.700-2.600 132.100 9c19.600 7.800 34.700 22.900 42.600 42.600 11.700 29.500 9 99.500 9 132.100s2.700 102.700-9 132.100z" /></svg>
          </a>
          <a href="#" aria-label="Twitter">
            <svg viewBox="0 32 448 448"><path d="M400 32H48C21.500 32 0 53.500 0 80v352c0 26.500 21.500 48 48 48h352c26.500 0 48-21.500 48-48V80c0-26.500-21.500-48-48-48zm-48.900 158.800c.2 2.800.2 5.700.2 8.500 0 86.700-66 186.600-186.600 186.600-37.200 0-71.700-10.800-100.700-29.400 5.300.6 10.400.8 15.800.8 30.700 0 58.900-10.400 81.400-28-28.800-.6-53-19.500-61.300-45.500 10.100 1.500 19.200 1.500 29.600-1.200-30-6.100-52.500-32.500-52.500-64.400v-.8c8.700 4.900 18.900 7.900 29.600 8.300a65.447 65.447 0 0 1-29.200-54.600c0-12.200 3.200-23.400 8.900-33.100 32.300 39.800 80.800 65.800 135.200 68.600-9.300-44.500 24-80.600 64-80.600 18.900 0 35.900 7.900 47.900 20.700 14.800-2.800 29-8.300 41.600-15.800-4.900 15.200-15.200 28-28.800 36.100 13.200-1.400 26-5.100 37.800-10.200-8.900 13.100-20.100 24.700-32.900 34z" /></svg>
          </a>
        </div>
      </main>

      <footer>Copyrights 2021, Maroine Nfif</footer>
    `;
  }
}
